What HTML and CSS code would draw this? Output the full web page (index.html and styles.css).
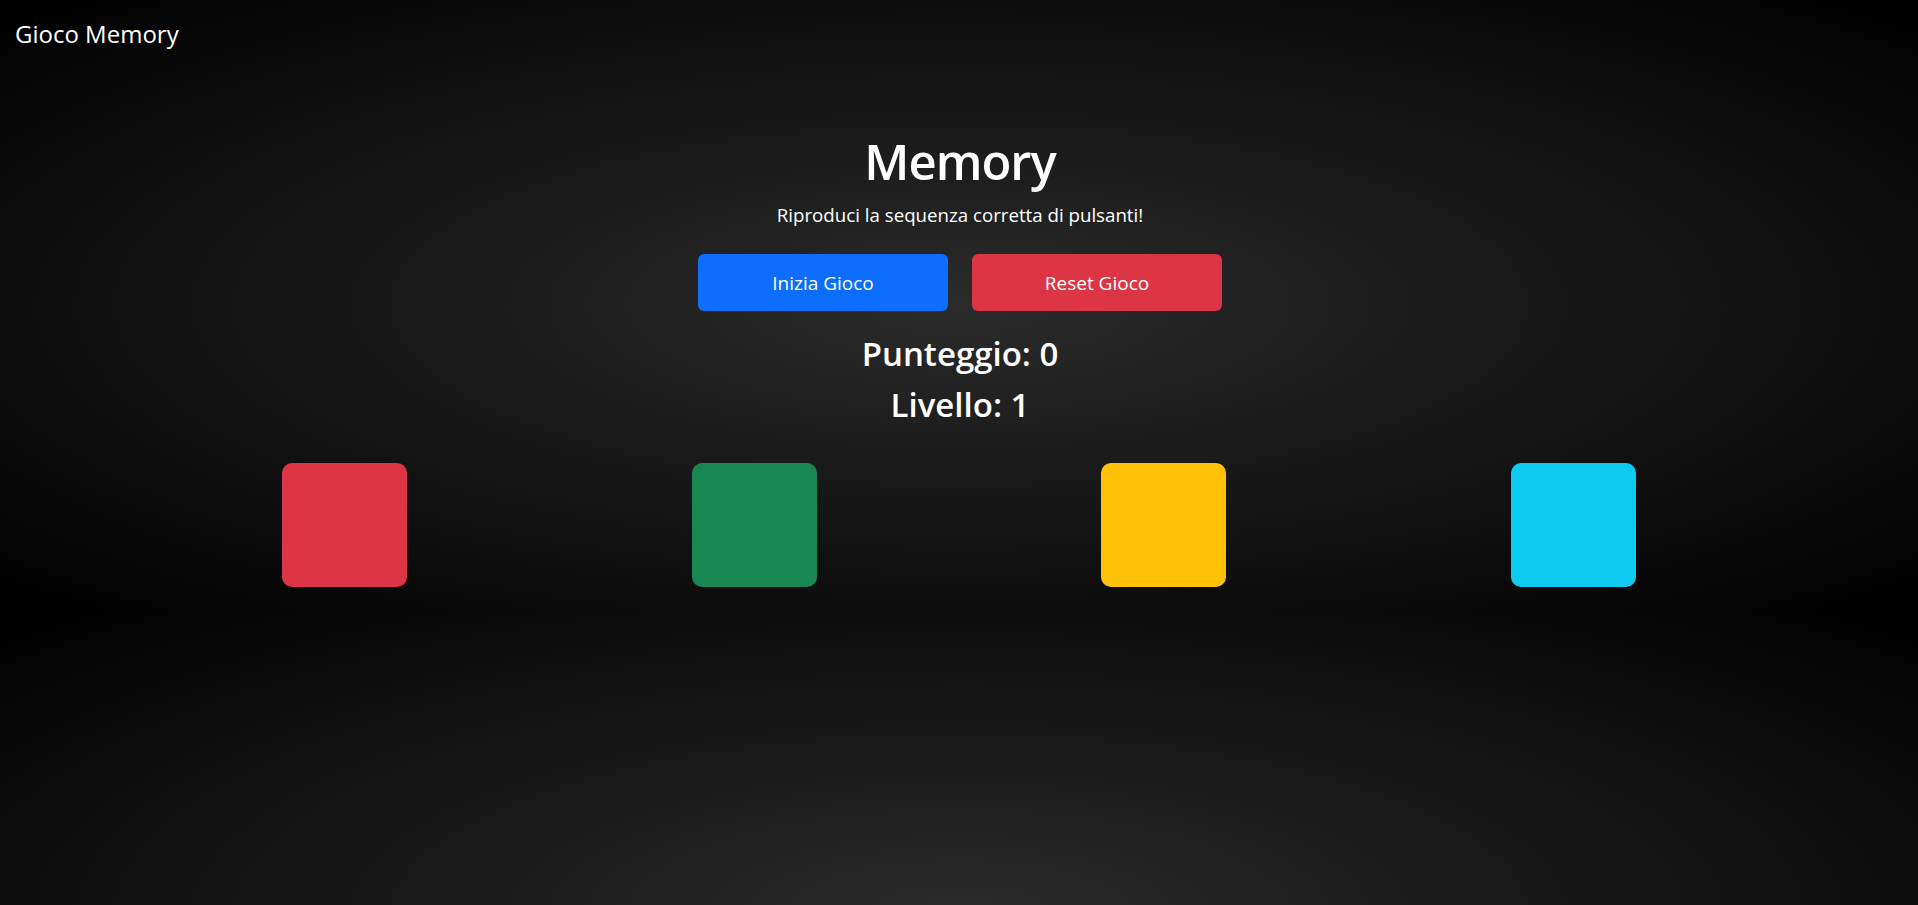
FILE: index.html
```html
<!DOCTYPE html>
<html lang="it">
<head>
<meta charset="utf-8">
<title>Gioco Memory</title>
<link rel="stylesheet" href="styles.css">
</head>
<body>
<nav class="navbar">
  <span class="brand">Gioco Memory</span>
</nav>
<main class="game">
  <h1 class="title">Memory</h1>
  <p class="subtitle">Riproduci la sequenza corretta di pulsanti!</p>
  <div class="actions">
    <button class="btn btn-start" type="button">Inizia Gioco</button>
    <button class="btn btn-reset" type="button">Reset Gioco</button>
  </div>
  <h2 class="stat">Punteggio: <span>0</span></h2>
  <h2 class="stat stat-level">Livello: <span>1</span></h2>
  <div class="pads">
    <div class="pad pad-red"></div>
    <div class="pad pad-green"></div>
    <div class="pad pad-yellow"></div>
    <div class="pad pad-cyan"></div>
  </div>
</main>
</body>
</html>
```
FILE: styles.css
```css
html {
  min-height: 100%;
  background-color: #000;
  background-image: radial-gradient(ellipse at center, #2b2b2b 0%, #000 100%);
  background-size: 100% 610px;
  background-repeat: repeat;
}

body {
  margin: 0;
  color: #fff;
  font-family: "Open Sans", "Noto Sans", sans-serif;
}

.navbar {
  padding: 19px 15px 21px;
  height: 30px;
}

.brand {
  display: block;
  font-size: 24px;
  line-height: 30px;
  color: #fff;
}

.game {
  padding: 60px 0 0 2px;
  display: flex;
  flex-direction: column;
  align-items: center;
  text-align: center;
}

.title {
  margin: 0;
  font-size: 49px;
  line-height: 62px;
  font-weight: 600;
  letter-spacing: -1px;
}

.subtitle {
  margin: 10px 0 0;
  font-size: 18.7px;
  line-height: 26px;
}

.actions {
  margin-top: 26px;
  display: flex;
  gap: 24px;
}

.btn {
  width: 250px;
  height: 57px;
  border: 0;
  border-radius: 6px;
  color: #fff;
  font-family: inherit;
  font-size: 19px;
  cursor: pointer;
}

.btn-start { background: #0d6efd; }
.btn-reset { background: #dc3545; }

.stat {
  margin: 23px 0 0;
  font-size: 33px;
  line-height: 40px;
  font-weight: 600;
}

.stat-level {
  margin-top: 11px;
}

.pads {
  align-self: stretch;
  margin: 38px 0 0 -2px;
  padding: 0 140px;
  display: flex;
  justify-content: space-around;
}

.pad {
  width: 125px;
  height: 124px;
  border-radius: 10px;
}

.pad-red { background: #dc3545; }
.pad-green { background: #198754; }
.pad-yellow { background: #ffc107; }
.pad-cyan { background: #0dcaf0; }
```
